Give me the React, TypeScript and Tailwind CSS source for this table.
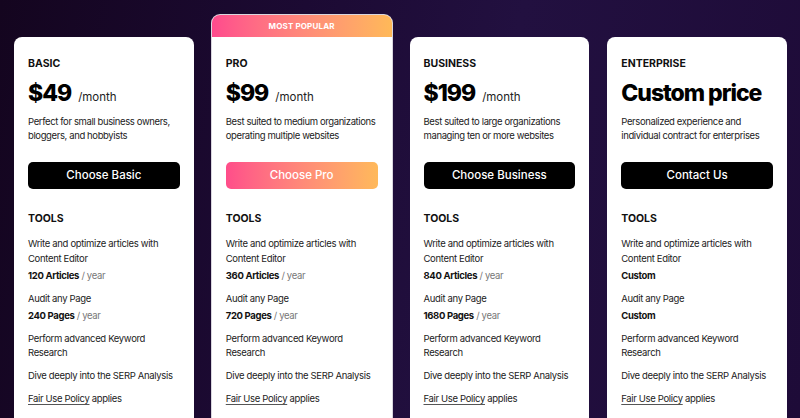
import React from 'react';

type Feature = { title: string; amount?: string; unit?: string };

type Plan = {
  name: string;
  price: string;
  period?: string;
  description: string;
  cta: string;
  popular?: boolean;
  features: Feature[];
};

const plans: Plan[] = [
  {
    name: 'BASIC',
    price: '$49',
    period: '/month',
    description: 'Perfect for small business owners, bloggers, and hobbyists',
    cta: 'Choose Basic',
    features: [
      { title: 'Write and optimize articles with Content Editor', amount: '120 Articles', unit: '/ year' },
      { title: 'Audit any Page', amount: '240 Pages', unit: '/ year' },
      { title: 'Perform advanced Keyword Research' },
      { title: 'Dive deeply into the SERP Analysis' },
    ],
  },
  {
    name: 'PRO',
    price: '$99',
    period: '/month',
    description: 'Best suited to medium organizations operating multiple websites',
    cta: 'Choose Pro',
    popular: true,
    features: [
      { title: 'Write and optimize articles with Content Editor', amount: '360 Articles', unit: '/ year' },
      { title: 'Audit any Page', amount: '720 Pages', unit: '/ year' },
      { title: 'Perform advanced Keyword Research' },
      { title: 'Dive deeply into the SERP Analysis' },
    ],
  },
  {
    name: 'BUSINESS',
    price: '$199',
    period: '/month',
    description: 'Best suited to large organizations managing ten or more websites',
    cta: 'Choose Business',
    features: [
      { title: 'Write and optimize articles with Content Editor', amount: '840 Articles', unit: '/ year' },
      { title: 'Audit any Page', amount: '1680 Pages', unit: '/ year' },
      { title: 'Perform advanced Keyword Research' },
      { title: 'Dive deeply into the SERP Analysis' },
    ],
  },
  {
    name: 'ENTERPRISE',
    price: 'Custom price',
    description: 'Personalized experience and individual contract for enterprises',
    cta: 'Contact Us',
    features: [
      { title: 'Write and optimize articles with Content Editor', amount: 'Custom' },
      { title: 'Audit any Page', amount: 'Custom' },
      { title: 'Perform advanced Keyword Research' },
      { title: 'Dive deeply into the SERP Analysis' },
    ],
  },
];

const PlanCard: React.FC<{ plan: Plan }> = ({ plan }) => {
  return (
    <div
      className={`flex flex-col bg-white rounded-[8px] overflow-hidden h-[420px] ${
        plan.popular ? 'ring-1 ring-[#d9d6de]' : 'mt-[22px]'
      }`}
    >
      {plan.popular && (
        <div className="h-[22px] shrink-0 flex items-center justify-center bg-gradient-to-r from-[#ff4a8d] to-[#ffb958] text-white text-[8px] font-bold tracking-[0.02em]">
          MOST POPULAR
        </div>
      )}
      <div className="flex flex-col pt-[19px] px-[14px]">
        <h3 className="text-[10.5px] leading-[16px] font-bold text-[#111]">{plan.name}</h3>

        <div className="mt-[7px] flex items-baseline gap-[7px] h-[28px]">
          <span className="text-[23px] leading-[28px] font-extrabold tracking-[-0.045em] text-black">{plan.price}</span>
          {plan.period && <span className="text-[11.5px] text-[#222]">{plan.period}</span>}
        </div>

        <p className="mt-[8px] text-[9.5px] leading-[14px] tracking-[-0.04em] text-[#222] h-[28px]">{plan.description}</p>

        <button
          className={`mt-[19px] h-[27px] w-full rounded-[5px] text-[11.5px] font-medium text-white ${
            plan.popular ? 'bg-gradient-to-r from-[#ff4d8a] to-[#ffb95a]' : 'bg-black'
          }`}
        >
          {plan.cta}
        </button>

        <h4 className="mt-[22px] text-[10.5px] leading-[16px] font-bold text-[#111]">TOOLS</h4>

        <ul className="mt-[10px] flex flex-col gap-[8.5px] text-[9.5px] leading-[14.5px] tracking-[-0.035em] text-[#222]">
          {plan.features.map((f) => (
            <li key={f.title}>
              <p className="pr-[3px]">{f.title}</p>
              {f.amount && (
                <p className="mt-[2.5px]">
                  <span className="font-bold text-[#111]">{f.amount}</span>
                  {f.unit && <span className="text-[#777]"> {f.unit}</span>}
                </p>
              )}
            </li>
          ))}
          <li>
            <a href="#" className="underline underline-offset-[1.5px] decoration-[#555]">Fair Use Policy</a> applies
          </li>
        </ul>
      </div>
    </div>
  );
};

export default function App() {
  return (
    <div
      className="h-[418px] w-[800px] overflow-hidden bg-[linear-gradient(100deg,#14051f_0%,#1c0a33_35%,#221040_60%,#1e0b38_100%)]"
      style={{ fontFamily: 'Inter, "Noto Sans", sans-serif' }}
    >
      <div className="grid grid-cols-4 gap-[18px] pl-[14px] pr-[13px] pt-[15px]">
        {plans.map((p) => (
          <PlanCard key={p.name} plan={p} />
        ))}
      </div>
    </div>
  );
}
